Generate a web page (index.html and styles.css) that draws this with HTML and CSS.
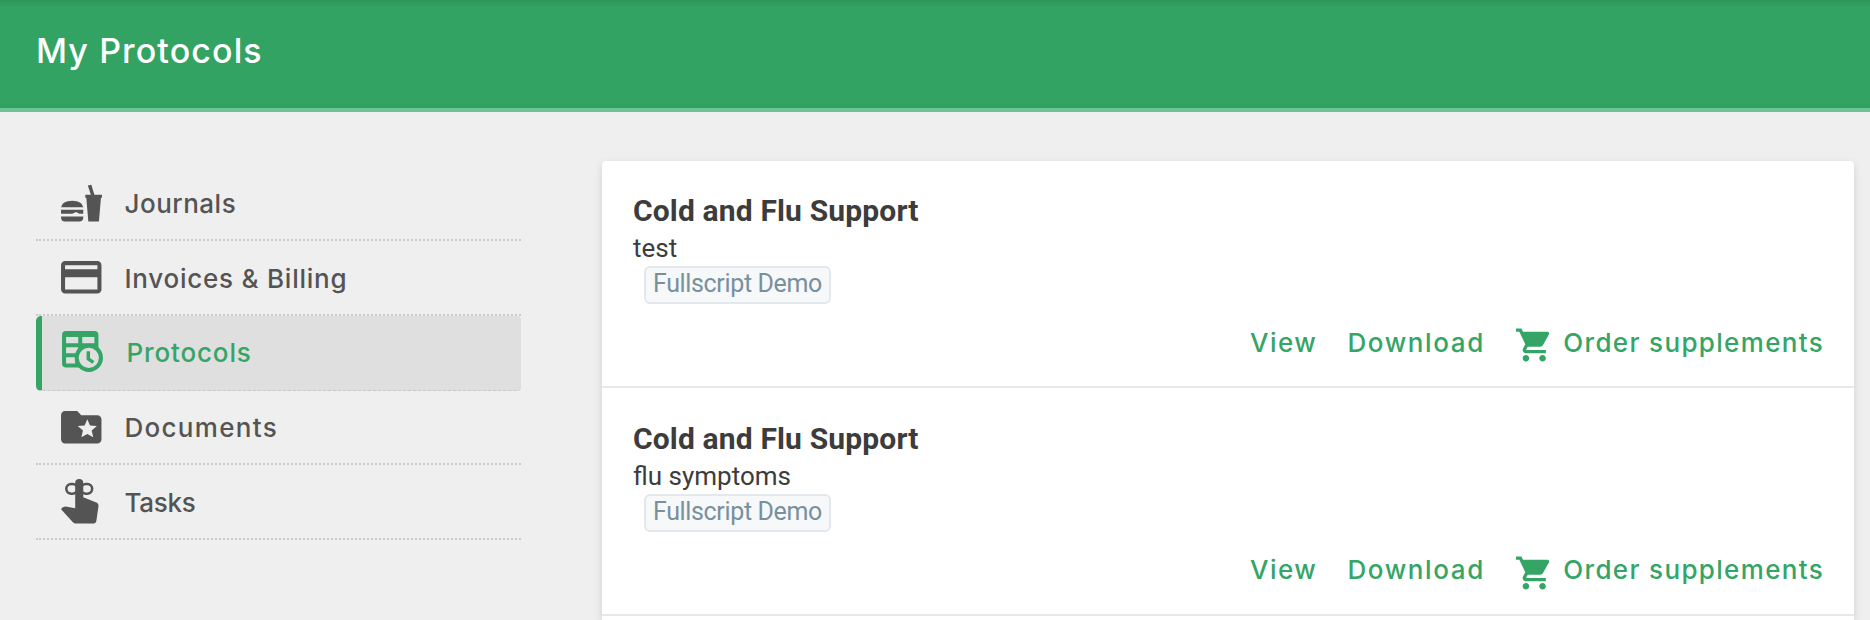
FILE: index.html
```html
<!DOCTYPE html>
<html lang="en">
<head>
<meta charset="utf-8">
<title>My Protocols</title>
<link rel="stylesheet" href="styles.css">
</head>
<body>
<header class="header"><h1 class="header-title">My Protocols</h1></header>
<div class="layout">
  <nav class="sidebar">
    <a class="nav-item">
      <svg class="nav-icon" viewBox="0 0 48 48"><path d="M4 28q1-6.500 11-6.500T26 28zM4 30.500h22v4h-4l-3-1.800-4 1.800H4zM4 37h22v1q0 4-4 4H8q-4 0-4-4z"/><path d="M28 15.500h5.500L30.500 6.500l3.500-.8 3 9.800h7.500v3h-1L41.500 42H31L29 18.500h-1z"/></svg>
      <span class="nav-label journals">Journals</span>
    </a>
    <a class="nav-item">
      <svg class="nav-icon" viewBox="0 0 24 24"><path d="M20 4H4c-1.110 0-2 .89-2 2v12c0 1.110.89 2 2 2h16c1.110 0 2-.89 2-2V6c0-1.110-.89-2-2-2zm0 14H4v-6h16v6zm0-10H4V6h16v2z"/></svg>
      <span class="nav-label invoices">Invoices &amp; Billing</span>
    </a>
    <a class="nav-item active">
      <svg class="nav-icon" viewBox="0 0 48 48"><path fill-rule="evenodd" d="M8 4h28q4 0 4 4v14h-4l-5 2-6 8-2 8H8q-4 0-4-4V8q0-4 4-4zM8 10v6h12v-6zm16 0v6h12v-6zM8 20v6h12v-6zM8 30v6h9v-6z"/><circle cx="30.500" cy="30.500" r="12" fill="#dfdfdf" stroke="currentColor" stroke-width="4"/><path d="M30 24v7.500l5 3.500" fill="none" stroke="currentColor" stroke-width="3.400"/></svg>
      <span class="nav-label protocols">Protocols</span>
    </a>
    <a class="nav-item">
      <svg class="nav-icon" viewBox="0 0 24 24"><path d="M20 6h-8l-2-2H4c-1.100 0-2 .9-2 2v12c0 1.100.9 2 2 2h16c1.100 0 2-.9 2-2V8c0-1.100-.9-2-2-2zm-2.060 11L15 15.280 12.060 17l.78-3.330-2.590-2.240 3.410-.29L15 8l1.340 3.140 3.410.29-2.590 2.240.78 3.330z"/></svg>
      <span class="nav-label documents">Documents</span>
    </a>
    <a class="nav-item">
      <svg class="nav-icon" viewBox="0 0 48 48"><path d="M18 31V6q0-4 4-4t4 4v14l13.500 5.500q2 1 1.500 4L39 43q-.5 3-2.500 3H18.500q-1.500 0-3-1.500L4 32q1.500-3.500 6-2.500z"/><rect x="9.200" y="7" width="11" height="9.500" rx="4.800" fill="none" stroke="currentColor" stroke-width="2.500"/><rect x="23.800" y="7" width="11" height="9.500" rx="4.800" fill="none" stroke="currentColor" stroke-width="2.500"/></svg>
      <span class="nav-label tasks">Tasks</span>
    </a>
  </nav>
  <main class="card">
    <section class="protocol">
      <h2 class="protocol-title">Cold and Flu Support</h2>
      <p class="protocol-note">test</p>
      <span class="tag">Fullscript Demo</span>
      <div class="actions">
        <a class="action view">View</a>
        <a class="action download">Download</a>
        <a class="action order"><svg class="cart" viewBox="1 2 20.500 20"><path d="M7 18c-1.100 0-1.990.9-1.990 2S5.900 22 7 22s2-.9 2-2-.9-2-2-2zM1 2v2h2l3.600 7.590-1.350 2.450c-.16.28-.25.61-.25.96 0 1.100.9 2 2 2h12v-2H7.420c-.14 0-.25-.11-.25-.25l.03-.12.9-1.630h7.450c.75 0 1.410-.41 1.750-1.030l3.580-6.490c.08-.14.12-.31.12-.48 0-.55-.45-1-1-1H5.210l-.94-2H1zm16 16c-1.100 0-1.990.9-1.990 2s.89 2 1.990 2 2-.9 2-2-.9-2-2-2z"/></svg><span class="order-label">Order supplements</span></a>
      </div>
    </section>
    <section class="protocol">
      <h2 class="protocol-title">Cold and Flu Support</h2>
      <p class="protocol-note">flu symptoms</p>
      <span class="tag">Fullscript Demo</span>
      <div class="actions">
        <a class="action view">View</a>
        <a class="action download">Download</a>
        <a class="action order"><svg class="cart" viewBox="1 2 20.500 20"><path d="M7 18c-1.100 0-1.990.9-1.990 2S5.900 22 7 22s2-.9 2-2-.9-2-2-2zM1 2v2h2l3.600 7.590-1.350 2.450c-.16.28-.25.61-.25.96 0 1.100.9 2 2 2h12v-2H7.420c-.14 0-.25-.11-.25-.25l.03-.12.9-1.630h7.450c.75 0 1.410-.41 1.750-1.030l3.580-6.490c.08-.14.12-.31.12-.48 0-.55-.45-1-1-1H5.210l-.94-2H1zm16 16c-1.100 0-1.990.9-1.990 2s.89 2 1.990 2 2-.9 2-2-.9-2-2-2z"/></svg><span class="order-label">Order supplements</span></a>
      </div>
    </section>
  </main>
</div>
</body>
</html>
```
FILE: styles.css
```css
* { box-sizing: border-box; }
body {
  display: flex;
  flex-direction: column;
  margin: 0;
  height: 620px;
  overflow: hidden;
  background: #efefef;
  color: #3c3c3c;
  font-family: Roboto, "Liberation Sans", sans-serif;
}
h1, h2, p { margin: 0; }
.header {
  flex: none;
  height: 111.500px;
  padding: 31px 0 0 36px;
  background: linear-gradient(#2f965b, #33a363 8px, #33a363 103px, #2fa05f 107px);
  border-bottom: 4px solid #6fc294;
}
.header-title {
  color: #fff;
  font: 450 34px/40px Inter, sans-serif;
  letter-spacing: 1.100px;
}
.layout { display: flex; flex: 1; min-height: 0; }
.sidebar {
  width: 485px;
  margin: 55px 81px 0 36px;
}
.nav-item {
  display: flex;
  align-items: center;
  height: 74.700px;
  padding-left: 20.500px;
  border-bottom: 2px dotted #cbcbcb;
  color: #545454;
}
.nav-icon {
  width: 48.500px;
  height: 48.500px;
  fill: currentColor;
}
.nav-label {
  padding-top: 3px;
  margin-left: 19.500px;
  font: 500 26px/32px Inter, sans-serif;
  white-space: nowrap;
}
.journals { letter-spacing: .5px; }
.invoices { letter-spacing: .76px; }
.protocols { letter-spacing: .85px; }
.documents { letter-spacing: 1.300px; }
.tasks { letter-spacing: -.3px; }
.nav-item.active {
  padding-left: 16px;
  color: #35a566;
  background: #dfdfdf;
  border-left: 6px solid #35a566;
  border-bottom: 1px dashed #c8c8c8;
  border-radius: 5px 4px 4px 5px;
}
.active .nav-icon { margin-top: -2px; }
.active .nav-label { margin-left: 20px; padding-top: 1px; }
.card {
  width: 1252px;
  margin-top: 49px;
  background: #fff;
  border-radius: 4px 4px 0 0;
  box-shadow: 0 3px 8px rgba(0, 0, 0, .13);
}
.protocol {
  height: 227.500px;
  padding: 31.500px 30px 0 31px;
  border-bottom: 2px solid #e8e8e8;
}
.protocol-title { font-size: 30px; line-height: 38px; font-weight: 700; letter-spacing: .15px; }
.protocol-note { font-size: 26px; line-height: 36px; }
.tag {
  display: block;
  width: 187px;
  height: 38px;
  margin-left: 11px;
  border: 2px solid #e2e8ec;
  border-radius: 6px;
  background: #f6f8fa;
  color: #78909c;
  font-size: 25px;
  line-height: 32px;
  letter-spacing: -.35px;
  text-align: center;
  white-space: nowrap;
}
.actions {
  display: flex;
  justify-content: flex-end;
  align-items: flex-start;
  height: 36px;
  margin-top: 22.500px;
  color: #35a566;
}
.action { display: flex; font: 500 26px/32px Inter, sans-serif; white-space: nowrap; }
.view { margin-right: 30px; letter-spacing: 1.500px; }
.download { margin-right: 31.500px; letter-spacing: 1.600px; }
.order { letter-spacing: 1.330px; }
.cart { width: 34px; height: 34px; margin-top: 1.500px; fill: currentColor; }
.order-label { margin-left: 13px; }
```
